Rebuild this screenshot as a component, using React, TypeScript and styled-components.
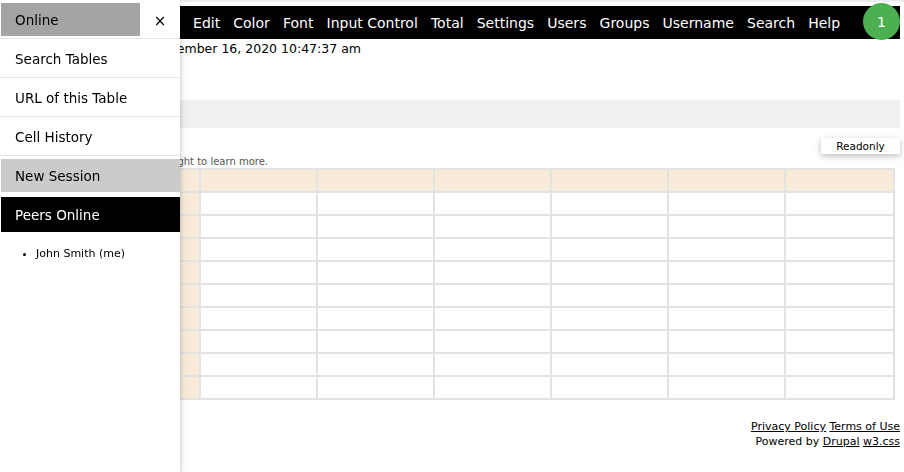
import React from "react";
import styled, { createGlobalStyle } from "styled-components";

const GlobalStyle = createGlobalStyle`
  html, body { margin: 0; padding: 0; background: #fff; }
  body { font-family: "DejaVu Sans", Verdana, sans-serif; color: #000; }
  * { box-sizing: border-box; }
`;

const Page = styled.div`
  border-top: 2px solid #ececec;
  min-height: 470px;
`;

const Main = styled.main`
  padding: 4px 4px 0 8px;
`;

const NavBar = styled.nav`
  display: flex;
  align-items: center;
  height: 33px;
  background: #000;
  padding-left: 178.5px;
`;

const NavItem = styled.span`
  color: #fff;
  font-size: 14px;
  padding: 2px 6.55px 0;
  line-height: 31px;
  white-space: nowrap;
`;

const Badge = styled.span`
  margin-left: auto;
  width: 37px;
  height: 37px;
  margin-top: -3px;
  margin-bottom: -1px;
  border-radius: 50%;
  background: #4caf50;
  color: #fff;
  font-size: 14px;
  display: flex;
  align-items: center;
  justify-content: center;
`;

const DateLine = styled.div`
  font-size: 12.5px;
  line-height: 16px;
  padding: 2px 0 0 60px;
  white-space: nowrap;
`;

const GrayBand = styled.div`
  height: 28px;
  background: #f1f1f1;
  margin-top: 43px;
`;

const InfoRow = styled.div`
  display: flex;
  align-items: flex-end;
  justify-content: space-between;
  margin-top: 10px;
  height: 30px;
  padding-bottom: 1px;
`;

const Note = styled.span`
  font-size: 10px;
  color: #555;
  padding-left: 20px;
  white-space: nowrap;
`;

const ReadonlyButton = styled.button`
  align-self: flex-start;
  font-family: inherit;
  font-size: 10.5px;
  color: #000;
  background: #fff;
  border: none;
  width: 79px;
  height: 16px;
  padding: 0;
  box-shadow: 0 2px 5px 0 rgba(0, 0, 0, 0.16), 0 2px 10px 0 rgba(0, 0, 0, 0.12);
`;

const Grid = styled.div`
  display: grid;
  grid-template-columns: 189px repeat(5, 115px) 107px;
  grid-auto-rows: 21px;
  gap: 2px;
  padding: 2px;
  width: 887px;
  background: #e3e3e3;
`;

const Cell = styled.div<{ $head?: boolean }>`
  background: ${(p) => (p.$head ? "#f8ebda" : "#fff")};
`;

const Footer = styled.footer`
  margin-top: 19px;
  text-align: right;
  font-size: 11px;
  line-height: 15px;
`;

const FootLink = styled.a`
  color: #000;
  text-decoration: underline;
`;

const Sidebar = styled.aside`
  position: fixed;
  top: 0;
  left: 0;
  bottom: 0;
  width: 180px;
  background: #fff;
  z-index: 10;
  box-shadow: 0 2px 5px 0 rgba(0, 0, 0, 0.16), 0 2px 10px 0 rgba(0, 0, 0, 0.12);
  font-size: 13.5px;
`;

const SideHeader = styled.div`
  display: flex;
  padding: 3px 0 2px 1px;
  border-bottom: 1px solid #e6e6e6;
`;

const HeaderTitle = styled.div`
  width: 139px;
  height: 33px;
  line-height: 35px;
  padding-left: 14px;
  background: #a4a4a4;
`;

const CloseButton = styled.div`
  flex: 1;
  display: flex;
  align-items: center;
  justify-content: center;
  padding-top: 2px;
  font-size: 15px;
`;

const SideItem = styled.div`
  padding: 9px 15px 7px;
  line-height: 22px;
  border-bottom: 1px solid #e6e6e6;
`;

const SideBlock = styled.div<{ $tone: "grey" | "black" }>`
  margin-top: ${(p) => (p.$tone === "grey" ? "3px" : "5px")};
  margin-left: 1px;
  height: ${(p) => (p.$tone === "grey" ? "33px" : "35px")};
  line-height: ${(p) => (p.$tone === "grey" ? "35px" : "37px")};
  padding-left: 14px;
  background: ${(p) => (p.$tone === "grey" ? "#cbcbcb" : "#000")};
  color: ${(p) => (p.$tone === "grey" ? "#000" : "#fff")};
`;

const PeerList = styled.ul`
  margin: 13px 0 0;
  padding-left: 36px;
  font-size: 11px;
  line-height: 18px;
`;

const navItems = [
  "Edit",
  "Color",
  "Font",
  "Input Control",
  "Total",
  "Settings",
  "Users",
  "Groups",
  "Username",
  "Search",
  "Help",
];

const ROWS = 10;
const COLS = 7;

export default function App() {
  const cells: React.ReactNode[] = [];
  for (let r = 0; r < ROWS; r++) {
    for (let c = 0; c < COLS; c++) {
      cells.push(<Cell key={`${r}-${c}`} $head={r === 0 || c === 0} />);
    }
  }
  return (
    <>
      <GlobalStyle />
      <Page>
        <Main>
          <NavBar>
            {navItems.map((n) => (
              <NavItem key={n}>{n}</NavItem>
            ))}
            <Badge>1</Badge>
          </NavBar>
          <DateLine>Wednesday, September 16, 2020 10:47:37 am</DateLine>
          <GrayBand />
          <InfoRow>
            <Note>Select a cell and look to the right to learn more.</Note>
            <ReadonlyButton>Readonly</ReadonlyButton>
          </InfoRow>
          <Grid>{cells}</Grid>
          <Footer>
            <FootLink>Privacy Policy</FootLink> <FootLink>Terms of Use</FootLink>
            <br />
            Powered by <FootLink>Drupal</FootLink> <FootLink>w3.css</FootLink>
          </Footer>
        </Main>
        <Sidebar>
          <SideHeader>
            <HeaderTitle>Online</HeaderTitle>
            <CloseButton>×</CloseButton>
          </SideHeader>
          <SideItem>Search Tables</SideItem>
          <SideItem>URL of this Table</SideItem>
          <SideItem>Cell History</SideItem>
          <SideBlock $tone="grey">New Session</SideBlock>
          <SideBlock $tone="black">Peers Online</SideBlock>
          <PeerList>
            <li>John Smith (me)</li>
          </PeerList>
        </Sidebar>
      </Page>
    </>
  );
}
